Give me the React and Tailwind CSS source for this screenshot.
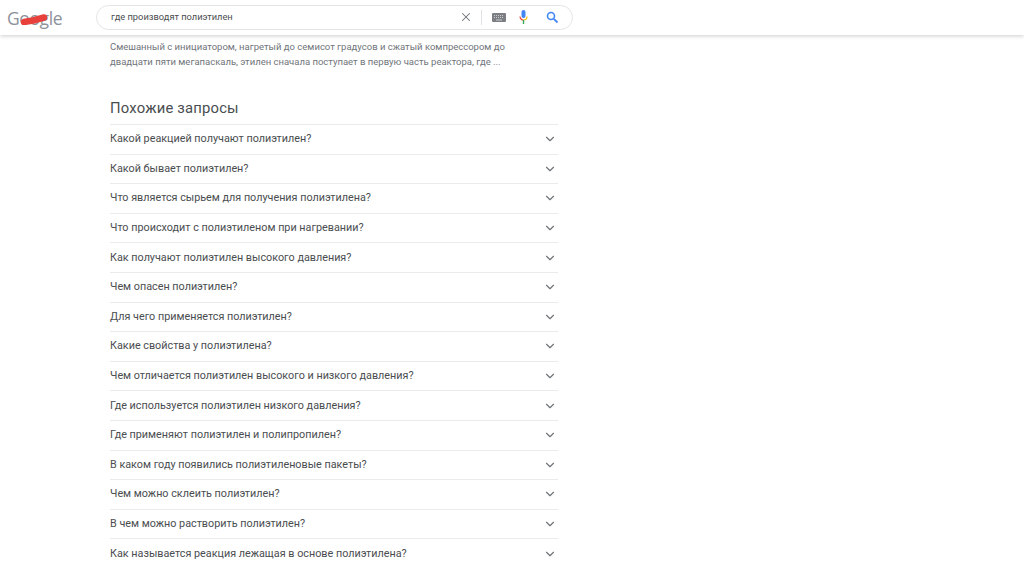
import { ChevronDown, X } from "lucide-react";

const questions = [
  "Какой реакцией получают полиэтилен?",
  "Какой бывает полиэтилен?",
  "Что является сырьем для получения полиэтилена?",
  "Что происходит с полиэтиленом при нагревании?",
  "Как получают полиэтилен высокого давления?",
  "Чем опасен полиэтилен?",
  "Для чего применяется полиэтилен?",
  "Какие свойства у полиэтилена?",
  "Чем отличается полиэтилен высокого и низкого давления?",
  "Где используется полиэтилен низкого давления?",
  "Где применяют полиэтилен и полипропилен?",
  "В каком году появились полиэтиленовые пакеты?",
  "Чем можно склеить полиэтилен?",
  "В чем можно растворить полиэтилен?",
  "Как называется реакция лежащая в основе полиэтилена?",
];

function Logo() {
  return (
    <div className="relative w-[56px] h-[20px] shrink-0">
      <span className="text-[17.5px] leading-[20px] tracking-[-0.4px] text-[#8d9299] font-['Open_Sans',sans-serif]">Google</span>
      <svg className="absolute left-[12px] top-[3px]" width="30" height="14" viewBox="0 0 30 14">
        <path d="M5 11 L14 9.5 L25 6.5" stroke="#e8413c" strokeWidth="6.5" strokeLinecap="round" fill="none" />
      </svg>
    </div>
  );
}

function Header() {
  return (
    <header className="h-[35px] bg-white flex items-center pl-[7px] shadow-[0_1px_4px_rgba(0,0,0,0.2)] relative z-10">
      <Logo />
      <div className="ml-[33px] w-[477px] h-[25px] rounded-full border border-[#e4e5e6] flex items-center pl-[14px] pr-[13px] mt-[-1px]">
        <span className="flex-1 text-[9.3px] text-[#4a4d50]">где производят полиэтилен</span>
        <X size={14} strokeWidth={1.8} className="text-[#70757a] mr-[1px]" />
        <div className="w-px h-[15px] bg-[#dfe1e5] ml-[7px] mr-[10px]" />
        <svg width="14" height="9" viewBox="0 0 14 9" className="mr-[13px]">
          <rect width="14" height="9" rx="1" fill="#7b7f84" />
          <path d="M2 2.5h10M2 4.5h10" stroke="#c9cbcd" strokeWidth="1" strokeDasharray="1 1" />
          <path d="M4 7h6" stroke="#c9cbcd" strokeWidth="1" />
        </svg>
        <svg width="9" height="14" viewBox="0 0 9 14" className="mr-[18px]">
          <rect x="2.5" y="0" width="4" height="8" rx="2" fill="#4285f4" />
          <path d="M1 6.5a3.5 3.5 0 0 0 3.5 3.5" stroke="#ea4335" strokeWidth="1.2" fill="none" />
          <path d="M8 6.5A3.5 3.5 0 0 1 4.5 10" stroke="#fbbc05" strokeWidth="1.2" fill="none" />
          <rect x="3.8" y="10" width="1.4" height="4" fill="#34a853" />
        </svg>
        <svg width="13" height="13" viewBox="0 0 13 13">
          <circle cx="5" cy="5" r="3.5" stroke="#4285f4" strokeWidth="1.6" fill="none" />
          <path d="M7.8 7.8 L11.5 11.5" stroke="#4285f4" strokeWidth="1.8" />
        </svg>
      </div>
    </header>
  );
}

export default function App() {
  return (
    <div className="h-[567px] overflow-hidden bg-white font-['Roboto','Liberation_Sans',sans-serif]">
      <Header />
      <main className="w-[448px] ml-[110px]">
        <p className="mt-[4px] text-[9.5px] leading-[15px] text-[#70757a] whitespace-nowrap">
          Смешанный с инициатором, нагретый до семисот градусов и сжатый компрессором до
          <br />
          двадцати пяти мегапаскаль, этилен сначала поступает в первую часть реактора, где ...
        </p>
        <h2 className="mt-[29px] text-[14.8px] leading-[20px] text-[#4a4d50] tracking-[0.2px]">Похожие запросы</h2>
        <ul className="mt-[6px]">
          {questions.map((q) => (
            <li key={q} className="h-[29.6px] border-t border-[#ebebeb] flex items-center justify-between pr-[1px] text-[#4a4d50]">
              <span className="text-[10.8px]">{q}</span>
              <ChevronDown size={14} strokeWidth={2} className="text-[#70757a]" />
            </li>
          ))}
        </ul>
      </main>
    </div>
  );
}
